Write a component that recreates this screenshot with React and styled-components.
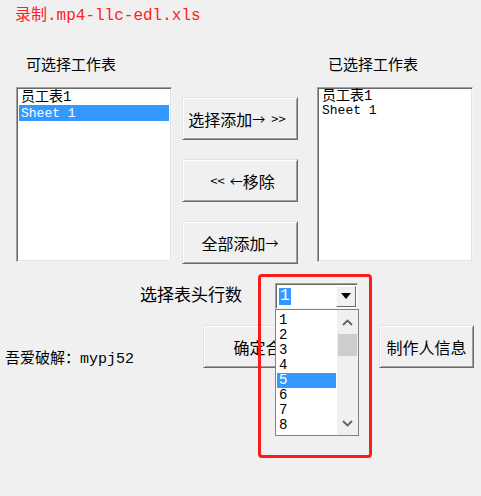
import React from "react";
import styled, { createGlobalStyle } from "styled-components";

const GlobalStyle = createGlobalStyle`
  html, body {
    margin: 0;
    padding: 0;
    background: #f0f0f0;
  }
  body {
    font-family: "Noto Sans CJK SC", "Noto Sans", sans-serif;
    color: #000;
  }
`;

const Window = styled.div`
  position: relative;
  width: 481px;
  height: 496px;
  background: #f0f0f0;
  overflow: hidden;
  display: flex;
  flex-direction: column;
`;

const Title = styled.div`
  margin: 4px 0 0 15px;
  height: 24px;
  line-height: 24px;
  font-family: "Liberation Mono", "Noto Sans CJK SC", monospace;
  font-size: 16px;
  color: #ff2020;
  white-space: nowrap;
`;

const Lists = styled.div`
  display: flex;
  margin-top: 26px;
  padding-left: 16px;
`;

const Column = styled.div`
  display: flex;
  flex-direction: column;
  width: 156px;
  margin-left: ${(p) => p.offset || 0}px;
`;

const Caption = styled.div`
  height: 20px;
  line-height: 20px;
  font-size: 15px;
  padding-left: ${(p) => p.indent}px;
  margin-bottom: 13px;
  white-space: nowrap;
`;

const ListBox = styled.div`
  box-sizing: border-box;
  height: 175px;
  background: #fff;
  border: 1px solid;
  border-color: #a0a0a0 #f4f4f4 #f4f4f4 #a0a0a0;
  box-shadow: inset 1px 1px 0 #696969, inset -1px -1px 0 #e3e3e3;
  padding: 1px 2px 0 2px;
`;

const ListItem = styled.div`
  height: ${(p) => p.rowHeight}px;
  line-height: ${(p) => p.rowHeight}px;
  padding-left: 2px;
  font-family: "Liberation Mono", "Noto Sans CJK SC", monospace;
  font-size: 14px;
  white-space: nowrap;
  background: ${(p) => (p.selected ? "#3399ff" : "transparent")};
  color: ${(p) => (p.selected ? "#fff" : "#000")};
`;

const Latin = styled.span`
  font-size: 13px;
`;

const ButtonStack = styled.div`
  display: flex;
  flex-direction: column;
  gap: 19px;
  width: 116px;
  margin: 43px 0 0 10px;
`;

const Button = styled.div`
  box-sizing: border-box;
  width: ${(p) => p.width || 116}px;
  height: 43px;
  display: flex;
  align-items: center;
  justify-content: center;
  background: #f0f0f0;
  border: 1px solid;
  border-color: #e3e3e3 #696969 #696969 #e3e3e3;
  box-shadow: inset 1px 1px 0 #fff, inset -1px -1px 0 #a0a0a0;
  font-size: 16px;
  white-space: nowrap;
`;

const Small = styled.span`
  font-size: 13px;
  margin: 0 ${(p) => p.gap || 0}px;
`;

const Arrow = styled.span`
  font-size: 13px;
`;

const HeaderRow = styled.div`
  display: flex;
  align-items: center;
  margin-top: 19px;
  padding-left: 140px;
  height: 26px;
`;

const HeaderLabel = styled.div`
  width: 108px;
  margin-right: 27px;
  margin-bottom: 5px;
  font-size: 17px;
  line-height: 20px;
  white-space: nowrap;
`;

const ComboWrap = styled.div`
  position: relative;
  width: 83px;
  height: 26px;
`;

const ComboField = styled.div`
  box-sizing: border-box;
  height: 26px;
  display: flex;
  align-items: center;
  justify-content: space-between;
  background: #fff;
  border: 1px solid;
  border-color: #a0a0a0 #f4f4f4 #f4f4f4 #a0a0a0;
  box-shadow: inset 1px 1px 0 #696969;
  padding: 1px 1px 1px 3px;
`;

const ComboValue = styled.span`
  height: 17px;
  line-height: 17px;
  padding: 0 1px;
  background: #3399ff;
  color: #fff;
  font-family: "Liberation Mono", monospace;
  font-size: 16px;
`;

const ArrowButton = styled.div`
  box-sizing: border-box;
  width: 20px;
  height: 21px;
  display: flex;
  align-items: center;
  justify-content: center;
  background: #f0f0f0;
  border: 1px solid;
  border-color: #fff #696969 #696969 #fff;
`;

const Dropdown = styled.div`
  position: absolute;
  left: 0;
  top: 26px;
  box-sizing: border-box;
  width: 84px;
  height: 127px;
  display: flex;
  background: #fff;
  border: 1px solid #828282;
  z-index: 2;
`;

const Options = styled.div`
  flex: 1;
  padding: 3px 1px 0 1px;
`;

const Option = styled.div`
  height: 15px;
  line-height: 15px;
  padding-left: 2px;
  font-family: "Liberation Mono", monospace;
  font-size: 14px;
  background: ${(p) => (p.selected ? "#3399ff" : "transparent")};
  color: ${(p) => (p.selected ? "#fff" : "#000")};
`;

const ScrollBar = styled.div`
  width: 21px;
  display: flex;
  flex-direction: column;
  background: #f0f0f0;
`;

const ScrollArrow = styled.div`
  height: 24px;
  display: flex;
  align-items: center;
  justify-content: center;
`;

const Thumb = styled.div`
  height: 22px;
  margin: 0 1px;
  background: #cdcdcd;
`;

const Track = styled.div`
  flex: 1;
`;

const BottomRow = styled.div`
  display: flex;
  align-items: flex-start;
  margin-top: 16px;
`;

const Credit = styled.div`
  margin: 22px 0 0 5px;
  width: 198px;
  height: 20px;
  line-height: 20px;
  font-size: 15px;
  white-space: nowrap;
`;

const Mono = styled.span`
  font-family: "Liberation Mono", monospace;
  font-size: 15px;
`;

const Spacer = styled.div`
  width: ${(p) => p.size}px;
`;

const Annotation = styled.div`
  position: absolute;
  left: 258px;
  top: 274px;
  width: 114px;
  height: 184px;
  box-sizing: border-box;
  border: 3px solid #ff1a1a;
  border-radius: 4px;
  z-index: 3;
  pointer-events: none;
`;

const Chevron = ({ up }) => (
  <svg width="11" height="7" viewBox="0 0 11 7">
    <path
      d={up ? "M1 6 L5.5 1.5 L10 6" : "M1 1 L5.5 5.5 L10 1"}
      fill="none"
      stroke="#606060"
      strokeWidth="1.8"
    />
  </svg>
);

const options = ["1", "2", "3", "4", "5", "6", "7", "8"];

export default function App() {
  return (
    <Window>
      <GlobalStyle />
      <Title>录制.mp4-llc-edl.xls</Title>

      <Lists>
        <Column>
          <Caption indent={10}>可选择工作表</Caption>
          <ListBox>
            <ListItem rowHeight={16}>员工表1</ListItem>
            <ListItem rowHeight={16} selected>
              <Latin>Sheet 1</Latin>
            </ListItem>
          </ListBox>
        </Column>

        <ButtonStack>
          <Button>
            选择添加<Arrow>→</Arrow>
            <Small gap={6}>&gt;&gt;</Small>
          </Button>
          <Button>
            <Small gap={5}>&lt;&lt;</Small>
            <Arrow>←</Arrow>移除
          </Button>
          <Button>
            全部添加<Arrow>→</Arrow>
          </Button>
        </ButtonStack>

        <Column offset={19}>
          <Caption indent={11}>已选择工作表</Caption>
          <ListBox>
            <ListItem rowHeight={15}>员工表1</ListItem>
            <ListItem rowHeight={13}>
              <Latin>Sheet 1</Latin>
            </ListItem>
          </ListBox>
        </Column>
      </Lists>

      <HeaderRow>
        <HeaderLabel>选择表头行数</HeaderLabel>
        <ComboWrap>
          <ComboField>
            <ComboValue>1</ComboValue>
            <ArrowButton>
              <svg width="10" height="6" viewBox="0 0 10 6">
                <path d="M0 0 H10 L5 6 Z" fill="#000" />
              </svg>
            </ArrowButton>
          </ComboField>
          <Dropdown>
            <Options>
              {options.map((o) => (
                <Option key={o} selected={o === "5"}>
                  {o}
                </Option>
              ))}
            </Options>
            <ScrollBar>
              <ScrollArrow>
                <Chevron up />
              </ScrollArrow>
              <Thumb />
              <Track />
              <ScrollArrow>
                <Chevron />
              </ScrollArrow>
            </ScrollBar>
          </Dropdown>
        </ComboWrap>
      </HeaderRow>

      <BottomRow>
        <Credit>
          吾爱破解：<Mono>mypj52</Mono>
        </Credit>
        <Button width={125}>确定合并</Button>
        <Spacer size={51} />
        <Button width={95}>制作人信息</Button>
      </BottomRow>

      <Annotation />
    </Window>
  );
}
